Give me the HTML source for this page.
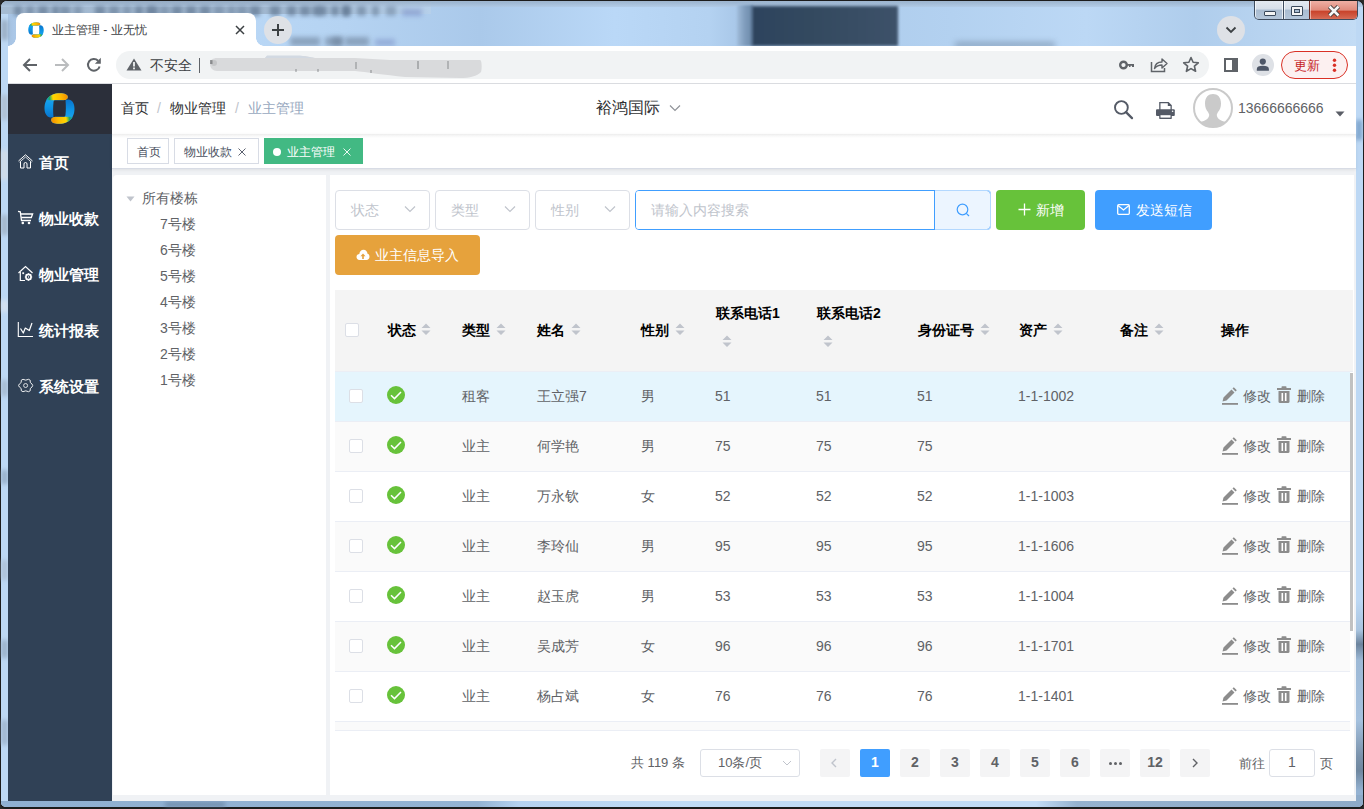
<!DOCTYPE html>
<html><head><meta charset="utf-8">
<style>
*{box-sizing:border-box;margin:0;padding:0}
html,body{width:1364px;height:809px;overflow:hidden}
body{position:relative;font-family:"Liberation Sans",sans-serif;background:#2a2a2a;color:#606266}
.a{position:absolute}
/* window frame */
#frame{left:0;top:0;width:1364px;height:809px;border:1px solid #1c1c1c;border-bottom-width:2px;border-radius:7px 7px 6px 6px;background:#bdd8f4}
#toolbar{left:8px;top:46px;width:1348px;height:37px;background:#fff}
#tbline{left:8px;top:83px;width:1348px;height:1px;background:#dadce0}
#tab{left:16px;top:13px;width:240px;height:34px;background:#fff;border-radius:8px 8px 0 0}
.flare{width:8px;height:8px;top:38px}
#app{left:8px;top:84px;width:1348px;height:717px;background:#f0f2f5}
#sidebar{left:8px;top:84px;width:104px;height:717px;background:#304156}
#logo{left:8px;top:84px;width:104px;height:50px;background:#2b2f3a}
#header{left:112px;top:84px;width:1244px;height:50px;background:#fff}
#tags{left:112px;top:134px;width:1244px;height:35px;background:#fff;border-bottom:1px solid #d8dce5;box-shadow:0 1px 3px 0 rgba(0,0,0,.08)}
#lp{left:113px;top:175px;width:213px;height:620px;background:#fff;border-radius:4px 0 0 0}
#rp{left:330px;top:175px;width:1024px;height:620px;background:#fff}
.t{position:absolute;white-space:nowrap;line-height:1}
</style></head><body>
<div id="frame" class="a"></div>

<!-- blurred desktop -->
<div class="a" style="left:1px;top:801px;width:1362px;height:6px;background:linear-gradient(90deg,#8fb0d2 0%,#93b3d3 35%,#b5d2f0 38%,#c0dcf6 50%,#c2dcf6 76%,#95b2cf 79%,#8eabc9 100%);border-radius:0 0 5px 5px"></div>
<div class="a" style="left:1356px;top:600px;width:7px;height:201px;background:linear-gradient(180deg,#bcd8f4 0%,#a9c4df 15%,#6c849d 22%,#9db9d6 30%,#a5c1de 60%,#7a92ab 78%,#6f879f 85%,#94b2d2 95%)"></div>
<div class="a" style="left:1356px;top:795px;width:7px;height:12px;background:#8eabc9;border-radius:0 0 5px 0"></div>
<div class="a" style="left:165px;top:802px;width:60px;height:5px;background:#5d7896;filter:blur(2px);opacity:.6"></div>
<div class="a" style="left:1356px;top:120px;width:6px;height:20px;background:#7ba2cb;filter:blur(2px)"></div>

<div class="a" style="left:8px;top:2px;width:1348px;height:44px;background:linear-gradient(90deg,#a7c4e4 0%,#b3d0ef 2%,#bddbf9 10%,#b5d3f2 25%,#aac9ea 35%,#bad8f7 45%,#b4d2f1 52%,#a9c8e9 54%,#b3d1f0 70%,#bcd8f5 80%,#afcdec 88%,#c3dcf5 100%)"></div>
<div class="a" style="left:1px;top:1px;width:430px;height:13px;background:linear-gradient(90deg,#a5bbd2 0%,#9fb6ce 60%,#b6d0ea 100%);border-radius:6px 0 0 0"></div><div class="a" style="left:2px;top:1px;width:1360px;height:6px;background:linear-gradient(180deg,#8fa5bd,#b0c8e2);opacity:.7;border-radius:5px 5px 0 0"></div>
<div class="a" style="left:290px;top:37px;width:30px;height:9px;background:#6d829b;filter:blur(2.5px);opacity:.6"></div><div class="a" style="left:325px;top:37px;width:18px;height:9px;background:#6d829b;filter:blur(2.5px);opacity:.6"></div><div class="a" style="left:332px;top:37px;width:10px;height:9px;background:#6d829b;filter:blur(2.5px);opacity:.6"></div><div class="a" style="left:345px;top:37px;width:24px;height:9px;background:#6d829b;filter:blur(2.5px);opacity:.6"></div><div class="a" style="left:375px;top:39px;width:20px;height:7px;background:#8196c9;filter:blur(2.5px);opacity:.6"></div>

<div class="a" style="left:14px;top:6px;width:8px;height:10px;background:#5f7590;filter:blur(2px);opacity:0.65"></div><div class="a" style="left:26px;top:6px;width:8px;height:10px;background:#5f7590;filter:blur(2px);opacity:0.55"></div><div class="a" style="left:38px;top:6px;width:10px;height:10px;background:#5f7590;filter:blur(2px);opacity:0.65"></div><div class="a" style="left:52px;top:6px;width:7px;height:10px;background:#5f7590;filter:blur(2px);opacity:0.65"></div><div class="a" style="left:60px;top:6px;width:10px;height:10px;background:#5f7590;filter:blur(2px);opacity:0.55"></div><div class="a" style="left:74px;top:6px;width:8px;height:10px;background:#5f7590;filter:blur(2px);opacity:0.45"></div><div class="a" style="left:95px;top:6px;width:10px;height:10px;background:#5f7590;filter:blur(2px);opacity:0.65"></div><div class="a" style="left:109px;top:6px;width:10px;height:10px;background:#5f7590;filter:blur(2px);opacity:0.55"></div><div class="a" style="left:123px;top:6px;width:8px;height:10px;background:#5f7590;filter:blur(2px);opacity:0.45"></div><div class="a" style="left:135px;top:6px;width:8px;height:10px;background:#5f7590;filter:blur(2px);opacity:0.65"></div><div class="a" style="left:146px;top:6px;width:7px;height:10px;background:#5f7590;filter:blur(2px);opacity:0.65"></div><div class="a" style="left:150px;top:6px;width:8px;height:10px;background:#5f7590;filter:blur(2px);opacity:0.65"></div><div class="a" style="left:160px;top:6px;width:9px;height:10px;background:#5f7590;filter:blur(2px);opacity:0.45"></div><div class="a" style="left:172px;top:6px;width:10px;height:10px;background:#5f7590;filter:blur(2px);opacity:0.65"></div><div class="a" style="left:186px;top:6px;width:10px;height:10px;background:#5f7590;filter:blur(2px);opacity:0.65"></div><div class="a" style="left:200px;top:6px;width:10px;height:10px;background:#5f7590;filter:blur(2px);opacity:0.65"></div><div class="a" style="left:214px;top:6px;width:10px;height:10px;background:#5f7590;filter:blur(2px);opacity:0.45"></div><div class="a" style="left:228px;top:6px;width:7px;height:10px;background:#5f7590;filter:blur(2px);opacity:0.45"></div><div class="a" style="left:237px;top:6px;width:10px;height:10px;background:#5f7590;filter:blur(2px);opacity:0.45"></div><div class="a" style="left:250px;top:6px;width:10px;height:10px;background:#5f7590;filter:blur(2px);opacity:0.65"></div><div class="a" style="left:270px;top:6px;width:10px;height:10px;background:#5f7590;filter:blur(2px);opacity:0.65"></div><div class="a" style="left:287px;top:6px;width:9px;height:10px;background:#5f7590;filter:blur(2px);opacity:0.65"></div><div class="a" style="left:300px;top:6px;width:10px;height:10px;background:#5f7590;filter:blur(2px);opacity:0.65"></div><div class="a" style="left:312px;top:6px;width:9px;height:10px;background:#5f7590;filter:blur(2px);opacity:0.65"></div><div class="a" style="left:318px;top:6px;width:9px;height:10px;background:#5f7590;filter:blur(2px);opacity:0.65"></div><div class="a" style="left:331px;top:6px;width:8px;height:10px;background:#5f7590;filter:blur(2px);opacity:0.65"></div><div class="a" style="left:342px;top:6px;width:7px;height:10px;background:#5f7590;filter:blur(2px);opacity:0.65"></div><div class="a" style="left:343px;top:6px;width:8px;height:10px;background:#5f7590;filter:blur(2px);opacity:0.65"></div><div class="a" style="left:357px;top:6px;width:9px;height:10px;background:#5f7590;filter:blur(2px);opacity:0.55"></div><div class="a" style="left:372px;top:6px;width:7px;height:10px;background:#5f7590;filter:blur(2px);opacity:0.55"></div><div class="a" style="left:386px;top:6px;width:10px;height:10px;background:#5f7590;filter:blur(2px);opacity:0.45"></div><div class="a" style="left:402px;top:9px;width:20px;height:7px;background:#7c90c8;filter:blur(2.5px);opacity:.6"></div><div class="a" style="left:737px;top:5px;width:16px;height:41px;background:linear-gradient(90deg,#a0bcda,#7f9cbc 50%,#6a88a8);filter:blur(1px)"></div>
<div class="a" style="left:752px;top:6px;width:146px;height:40px;background:linear-gradient(90deg,#2d435d,#33495f 40%,#3d5169);filter:blur(1.5px)"></div>
<div class="a" style="left:955px;top:42px;width:100px;height:6px;background:#6f86a0;filter:blur(3px);opacity:.6"></div>
<div class="a" style="left:1px;top:20px;width:7px;height:20px;background:#8d9fb3;filter:blur(2px);opacity:.7"></div><div class="a" style="left:1px;top:95px;width:7px;height:25px;background:#a9b6c4;filter:blur(2px);opacity:.7"></div><div class="a" style="left:1px;top:150px;width:7px;height:30px;background:#d9dde2;filter:blur(2px);opacity:.7"></div><div class="a" style="left:1px;top:215px;width:7px;height:20px;background:#9aa9ba;filter:blur(2px);opacity:.7"></div><div class="a" style="left:1px;top:300px;width:7px;height:12px;background:#e0e6ee;filter:blur(2px);opacity:.7"></div><div class="a" style="left:1px;top:380px;width:7px;height:16px;background:#9eb0c4;filter:blur(2px);opacity:.7"></div><div class="a" style="left:1px;top:470px;width:7px;height:14px;background:#8aa0b8;filter:blur(2px);opacity:.7"></div><div class="a" style="left:1px;top:560px;width:7px;height:20px;background:#a8bace;filter:blur(2px);opacity:.7"></div><div class="a" style="left:1px;top:640px;width:7px;height:18px;background:#8ea3bb;filter:blur(2px);opacity:.7"></div><div class="a" style="left:1px;top:720px;width:7px;height:25px;background:#95aac2;filter:blur(2px);opacity:.7"></div>
<!-- window buttons -->
<div class="a" style="left:1254px;top:1px;width:104px;height:19px;border:1px solid #3e4c5e;border-top:none;border-radius:0 0 5px 5px;overflow:hidden;background:linear-gradient(180deg,#e3e9f0 0%,#d6dfe9 45%,#a9bcd1 50%,#b4c6da 100%)">
  <div class="a" style="left:0;top:0;width:102px;height:19px;border:1px solid rgba(255,255,255,.7);border-top:none;border-radius:0 0 4px 4px"></div>
  <div class="a" style="left:28px;top:0;width:1px;height:20px;background:#3e4c5e"></div>
  <div class="a" style="left:29px;top:0;width:1px;height:20px;background:rgba(255,255,255,.7)"></div>
  <div class="a" style="left:27px;top:0;width:1px;height:20px;background:rgba(255,255,255,.7)"></div>
  <div class="a" style="left:54px;top:0;width:1px;height:20px;background:#6b2a22"></div>
  <div class="a" style="left:55px;top:0;width:48px;height:20px;background:linear-gradient(180deg,#eeb0a5 0%,#e08b7c 45%,#c9442c 52%,#d4654f 85%,#e0907f 100%);border-left:1px solid rgba(255,255,255,.5)"></div>
  <div class="a" style="left:9px;top:10px;width:12px;height:5px;background:#f4f4f4;border:1px solid #3b4a5c;border-radius:1px"></div>
  <div class="a" style="left:36px;top:5px;width:12px;height:10px;background:#f4f4f4;border:1px solid #3b4a5c;border-radius:1px"></div>
  <div class="a" style="left:39px;top:8px;width:6px;height:4px;background:#a9bcd1;border:1px solid #3b4a5c"></div>
  <svg class="a" style="left:72px;top:4px" width="14" height="12" viewBox="0 0 14 12"><path d="M2.5 1.5 L11.5 10.5 M11.5 1.5 L2.5 10.5" stroke="#3b3b3b" stroke-width="4.4"/><path d="M2.5 1.5 L11.5 10.5 M11.5 1.5 L2.5 10.5" stroke="#f6f6f6" stroke-width="2.6"/></svg>
</div>
<!-- tab -->
<div id="tab" class="a"></div>
<div class="a" style="left:8px;top:38px;width:8px;height:8px;background:radial-gradient(circle at 0 0,transparent 7.5px,#fff 8px)"></div>
<div class="a" style="left:256px;top:38px;width:8px;height:8px;background:radial-gradient(circle at 100% 0,transparent 7.5px,#fff 8px)"></div>
<svg class="a" style="left:28px;top:22px" width="16" height="16" viewBox="0 0 32 32">
 <defs>
  <linearGradient id="fab" x1="0" y1="0" x2="0" y2="1"><stop offset="0" stop-color="#24acf2"/><stop offset=".55" stop-color="#0d95e6"/><stop offset="1" stop-color="#0a74cc"/></linearGradient>
  <linearGradient id="fay" gradientUnits="userSpaceOnUse" x1="2" y1="6" x2="24" y2="3"><stop offset="0" stop-color="#13a3e4"/><stop offset=".17" stop-color="#22a860"/><stop offset=".33" stop-color="#ffd600"/><stop offset=".7" stop-color="#fdb900"/><stop offset="1" stop-color="#f29000"/></linearGradient>
  <clipPath id="fac"><polygon points="0,7.5 32,7.5 32,-1 6,-1"/></clipPath>
  
 </defs>
 <g><path d="M9.8 24.6 C7 26.2 3 25.2 1.4 21 C0 17 0.1 11 3 6.5 C6 2 11 0.2 17 0.3 C21 0.4 24.6 1.5 24.6 4 C24.6 6.5 22 7.4 19.5 7.4 L11.2 7.4 C10.2 7.4 9.8 8.5 9.8 10 C9.3 14 9.3 19 9.8 24.6Z" fill="url(#fab)"/><path d="M9.8 24.6 C7 26.2 3 25.2 1.4 21 C0 17 0.1 11 3 6.5 C6 2 11 0.2 17 0.3 C21 0.4 24.6 1.5 24.6 4 C24.6 6.5 22 7.4 19.5 7.4 L11.2 7.4 C10.2 7.4 9.8 8.5 9.8 10 C9.3 14 9.3 19 9.8 24.6Z" fill="url(#fay)" clip-path="url(#fac)"/></g>
 <g transform="rotate(180 16 16)"><path d="M9.8 24.6 C7 26.2 3 25.2 1.4 21 C0 17 0.1 11 3 6.5 C6 2 11 0.2 17 0.3 C21 0.4 24.6 1.5 24.6 4 C24.6 6.5 22 7.4 19.5 7.4 L11.2 7.4 C10.2 7.4 9.8 8.5 9.8 10 C9.3 14 9.3 19 9.8 24.6Z" fill="url(#fab)"/><path d="M9.8 24.6 C7 26.2 3 25.2 1.4 21 C0 17 0.1 11 3 6.5 C6 2 11 0.2 17 0.3 C21 0.4 24.6 1.5 24.6 4 C24.6 6.5 22 7.4 19.5 7.4 L11.2 7.4 C10.2 7.4 9.8 8.5 9.8 10 C9.3 14 9.3 19 9.8 24.6Z" fill="url(#fay)" clip-path="url(#fac)"/></g>
</svg>
<div class="t" style="left:52px;top:24px;font-size:12px;color:#3c4043">业主管理 - 业无忧</div>
<svg class="a" style="left:235px;top:25px" width="10" height="10" viewBox="0 0 10 10"><path d="M1 1 L9 9 M9 1 L1 9" stroke="#3c4043" stroke-width="1.5"/></svg>
<div class="a" style="left:264px;top:16px;width:28px;height:28px;border-radius:50%;background:#dee1e6"></div>
<svg class="a" style="left:271px;top:23px" width="14" height="14" viewBox="0 0 14 14"><path d="M7 1 V13 M1 7 H13" stroke="#3c4043" stroke-width="2"/></svg>
<div class="a" style="left:1217px;top:16px;width:28px;height:28px;border-radius:50%;background:#dee1e6"></div>
<svg class="a" style="left:1225px;top:25px" width="12" height="10" viewBox="0 0 12 10"><path d="M1.5 2.5 L6 7 L10.5 2.5" stroke="#3c4043" stroke-width="1.8" fill="none"/></svg>

<div id="toolbar" class="a"></div>
<div id="tbline" class="a"></div>
<svg class="a" style="left:22px;top:57px" width="16" height="16" viewBox="0 0 16 16"><path d="M15 8 H2.5 M8 2 L2 8 L8 14" stroke="#5f6368" stroke-width="2" fill="none"/></svg>
<svg class="a" style="left:54px;top:57px" width="16" height="16" viewBox="0 0 16 16"><path d="M1 8 H13.5 M8 2 L14 8 L8 14" stroke="#babcbe" stroke-width="2" fill="none"/></svg>
<svg class="a" style="left:84px;top:55px" width="20" height="20" viewBox="84 55 20 20"><path d="M99.6 66.4 A5.9 5.9 0 1 1 98.1 60.7" stroke="#5f6368" stroke-width="2" fill="none"/><path d="M100.8 57.8 V63.8 H94.9Z" fill="#5f6368"/></svg>
<div class="a" style="left:116px;top:51px;width:1093px;height:28px;border-radius:14px;background:#f1f3f4"></div>
<svg class="a" style="left:126px;top:58px" width="16" height="13" viewBox="0 0 16 13"><path d="M8 0.5 L15.5 12.5 H0.5 Z" fill="#5f6368"/><rect x="7.1" y="4" width="1.8" height="4.5" fill="#f1f3f4"/><rect x="7.1" y="9.5" width="1.8" height="1.8" fill="#f1f3f4"/></svg>
<div class="t" style="left:150px;top:58px;font-size:14px;color:#3c4043">不安全</div>
<div class="a" style="left:199px;top:58px;width:1px;height:15px;background:#5f6368"></div>
<svg class="a" style="left:205px;top:54px;filter:blur(0.6px)" width="280" height="26" viewBox="0 0 280 26"><path d="M5 10 C5 6 8 4 12 4 L60 4 L62 2 L100 2 L110 4 L150 4 L185 6 L275 6 C277 6 277 15 276 18 C272 22 265 24 255 24 L200 23 C180 21 160 18 150 17 L12 17 C8 17 5 14 5 10Z" fill="#d9dadc"/><path d="M60 4 L62 1.5 L95 1.5 L110 4Z" fill="#d2d9e2"/><circle cx="9" cy="9" r="3" fill="#c5c6c8"/><rect x="5" y="6" width="2.5" height="4" fill="#606266" opacity=".6"/><rect x="212" y="7" width="2" height="8" fill="#55585c" opacity=".35"/><rect x="242" y="7" width="2" height="8" fill="#55585c" opacity=".3"/><rect x="150" y="8" width="2" height="7" fill="#55585c" opacity=".3"/><rect x="112" y="15" width="2" height="3" fill="#55585c" opacity=".3"/><rect x="90" y="15" width="2" height="3" fill="#55585c" opacity=".3"/><rect x="165" y="16" width="2" height="3" fill="#55585c" opacity=".3"/></svg>

<svg class="a" style="left:1119px;top:60px" width="16" height="10" viewBox="0 0 16 10"><circle cx="4.5" cy="5" r="3.3" stroke="#5f6368" stroke-width="2.4" fill="none"/><path d="M7.5 4 H15 V7 H13 V5.8 H11.5 V7 H10 V5.8 H7.5Z" fill="#5f6368"/></svg>
<svg class="a" style="left:1150px;top:57px" width="18" height="16" viewBox="0 0 18 16"><path d="M1.5 5 V14.5 H14.5 V11" stroke="#5f6368" stroke-width="1.5" fill="none"/><path d="M4.5 11.5 C5 7 8 5 12 5 V2 L17 6.5 L12 11 V8 C9 8 6.5 9 4.5 11.5Z" stroke="#5f6368" stroke-width="1.4" fill="none" stroke-linejoin="round"/></svg>
<svg class="a" style="left:1182px;top:56px" width="18" height="17" viewBox="0 0 18 17"><path d="M9 1.5 L11.1 6.3 L16.3 6.8 L12.4 10.2 L13.6 15.3 L9 12.6 L4.4 15.3 L5.6 10.2 L1.7 6.8 L6.9 6.3Z" stroke="#5f6368" stroke-width="1.6" fill="none" stroke-linejoin="round"/></svg>
<svg class="a" style="left:1224px;top:58px" width="14" height="14" viewBox="0 0 14 14"><rect x="1" y="1" width="12" height="12" fill="none" stroke="#5f6368" stroke-width="2"/><rect x="8" y="1" width="5" height="12" fill="#5f6368"/></svg>
<div class="a" style="left:1252px;top:54px;width:22px;height:22px;border-radius:50%;background:#dee1e6"></div>
<svg class="a" style="left:1252px;top:54px" width="22" height="22" viewBox="1252 54 22 22"><circle cx="1262.8" cy="61.6" r="3.1" fill="#4d5667"/><path d="M1256.8 70.8 V69 C1256.8 67 1259 65.8 1262.8 65.8 C1266.6 65.8 1268.9 67 1268.9 69 V70.8Z" fill="#4d5667"/></svg>
<div class="a" style="left:1281px;top:51px;width:67px;height:28px;border-radius:14px;border:1px solid #d93025;background:#fcf0f0"></div>
<svg class="a" style="left:1330px;top:57px" width="9" height="16" viewBox="0 0 9 16"><circle cx="4.5" cy="3.3" r="1.7" fill="#d93025"/><circle cx="4.5" cy="8.3" r="1.7" fill="#d93025"/><circle cx="4.5" cy="13.3" r="1.7" fill="#d93025"/></svg>
<div class="t" style="left:1294px;top:59px;font-size:13px;color:#c5221f">更新</div>

<div id="app" class="a"></div>
<div id="sidebar" class="a"></div>
<div id="logo" class="a"></div>
<div id="header" class="a"></div>
<div id="tags" class="a"></div>
<div class="a" style="left:112px;top:134px;width:1244px;height:4px;background:linear-gradient(180deg,#ececec,#f6f6f6 40%,#fff)"></div>
<div id="lp" class="a"></div>
<div id="rp" class="a"></div>

<!-- logo -->
<svg class="a" style="left:44px;top:93px" width="31" height="31" viewBox="0 0 32 32">
 <defs>
  <linearGradient id="lgb" x1="0" y1="0" x2="0" y2="1"><stop offset="0" stop-color="#24acf2"/><stop offset=".55" stop-color="#0d95e6"/><stop offset="1" stop-color="#0a74cc"/></linearGradient>
  <linearGradient id="lgy" gradientUnits="userSpaceOnUse" x1="2" y1="6" x2="24" y2="3"><stop offset="0" stop-color="#13a3e4"/><stop offset=".17" stop-color="#22a860"/><stop offset=".33" stop-color="#ffd600"/><stop offset=".7" stop-color="#fdb900"/><stop offset="1" stop-color="#f29000"/></linearGradient>
  <clipPath id="lgc"><polygon points="0,7.5 32,7.5 32,-1 6,-1"/></clipPath>
  
 </defs>
 <g><path d="M9.8 24.6 C7 26.2 3 25.2 1.4 21 C0 17 0.1 11 3 6.5 C6 2 11 0.2 17 0.3 C21 0.4 24.6 1.5 24.6 4 C24.6 6.5 22 7.4 19.5 7.4 L11.2 7.4 C10.2 7.4 9.8 8.5 9.8 10 C9.3 14 9.3 19 9.8 24.6Z" fill="url(#lgb)"/><path d="M9.8 24.6 C7 26.2 3 25.2 1.4 21 C0 17 0.1 11 3 6.5 C6 2 11 0.2 17 0.3 C21 0.4 24.6 1.5 24.6 4 C24.6 6.5 22 7.4 19.5 7.4 L11.2 7.4 C10.2 7.4 9.8 8.5 9.8 10 C9.3 14 9.3 19 9.8 24.6Z" fill="url(#lgy)" clip-path="url(#lgc)"/></g>
 <g transform="rotate(180 16 16)"><path d="M9.8 24.6 C7 26.2 3 25.2 1.4 21 C0 17 0.1 11 3 6.5 C6 2 11 0.2 17 0.3 C21 0.4 24.6 1.5 24.6 4 C24.6 6.5 22 7.4 19.5 7.4 L11.2 7.4 C10.2 7.4 9.8 8.5 9.8 10 C9.3 14 9.3 19 9.8 24.6Z" fill="url(#lgb)"/><path d="M9.8 24.6 C7 26.2 3 25.2 1.4 21 C0 17 0.1 11 3 6.5 C6 2 11 0.2 17 0.3 C21 0.4 24.6 1.5 24.6 4 C24.6 6.5 22 7.4 19.5 7.4 L11.2 7.4 C10.2 7.4 9.8 8.5 9.8 10 C9.3 14 9.3 19 9.8 24.6Z" fill="url(#lgy)" clip-path="url(#lgc)"/></g>
</svg>
<!-- sidebar menu -->
<svg class="a" style="left:12px;top:140px" width="28" height="260" viewBox="12 140 28 260" fill="none" stroke="#fff">
 <path d="M18.5 161 L25.5 154.8 L32.5 161" stroke-width="1"/><path d="M19.5 162.2 L25.5 157 L31.5 162.2" stroke-width="0.8"/>
 <path d="M20.5 161.5 V168 H24 V164 Q24 162.5 25.5 162.5 Q27 162.5 27 164 V168 H30.5 V161.5" stroke-width="1"/>
 <path d="M18 211.3 L20.3 211.8 L21.5 220.5 H31" stroke-width="1.3"/><path d="M20.6 214 H32.6 L31.3 217.5 H21.2" stroke-width="1.3"/>
 <circle cx="22.8" cy="223" r="1.3" fill="#fff" stroke="none"/><circle cx="29" cy="223" r="1.3" fill="#fff" stroke="none"/>
 <path d="M18.5 273 L25.5 266.5 L32.5 273" stroke-width="1.2"/><path d="M20.3 272 V280.5 H25" stroke-width="1.2"/>
 <rect x="22.3" y="272.3" width="1.8" height="1.8" fill="#fff" stroke="none"/>
 <circle cx="28.5" cy="277" r="2.6" stroke-width="1.6"/><circle cx="28.5" cy="277" r="0.7" fill="#fff" stroke="none"/>
 <path d="M28.5 273.3 V274.3 M28.5 279.7 V280.7 M24.8 277 H25.8 M31.2 277 H32.2 M25.9 274.4 L26.6 275.1 M30.4 278.9 L31.1 279.6 M31.1 274.4 L30.4 275.1 M26.6 278.9 L25.9 279.6" stroke-width="1.2"/>
 <path d="M18.3 322 V336.5 H33" stroke-width="1.1"/><path d="M20.5 328.5 L23.3 333 L25.3 328 L29.3 330.5 L32 323" stroke-width="1.2" stroke-linejoin="round"/>
 <path d="M23 379.3 Q25.7 381 28.5 379.3 Q31 379.5 30.3 382.5 Q32.5 384 32.7 385.5 Q32.5 387 30.3 388.5 Q31 391.5 28.5 391.7 Q25.7 390 23 391.7 Q20.5 391.5 21.2 388.5 Q18.8 387 18.6 385.5 Q18.8 384 21.2 382.5 Q20.5 379.5 23 379.3Z" stroke-width="0.9"/>
 <circle cx="25.6" cy="385.5" r="2" stroke-width="0.8"/>
</svg>


<div class="t" style="left:39px;top:155px;font-size:15px;color:#fff;font-weight:bold">首页</div>

<div class="t" style="left:39px;top:211px;font-size:15px;color:#fff;font-weight:bold">物业收款</div>

<div class="t" style="left:39px;top:267px;font-size:15px;color:#fff;font-weight:bold">物业管理</div>

<div class="t" style="left:39px;top:323px;font-size:15px;color:#fff;font-weight:bold">统计报表</div>

<div class="t" style="left:39px;top:379px;font-size:15px;color:#fff;font-weight:bold">系统设置</div>
<!-- header -->
<div class="t" style="left:121px;top:101px;font-size:14px;color:#303133">首页</div>
<div class="t" style="left:157px;top:101px;font-size:14px;color:#c0c4cc">/</div>
<div class="t" style="left:170px;top:101px;font-size:14px;color:#303133">物业管理</div>
<div class="t" style="left:235px;top:101px;font-size:14px;color:#c0c4cc">/</div>
<div class="t" style="left:248px;top:101px;font-size:14px;color:#97a8be">业主管理</div>
<div class="t" style="left:596px;top:100px;font-size:16px;color:#303133">裕鸿国际</div>
<svg class="a" style="left:669px;top:104px" width="12" height="8" viewBox="0 0 12 8"><path d="M1 1.5 L6 6.5 L11 1.5" stroke="#909399" stroke-width="1.2" fill="none"/></svg>
<svg class="a" style="left:1110px;top:96px" width="26" height="26" viewBox="1110 96 26 26"><circle cx="1121.4" cy="107.5" r="6.4" stroke="#545a66" stroke-width="1.9" fill="none"/><path d="M1126 112.1 L1132 118.1" stroke="#545a66" stroke-width="2.3" stroke-linecap="round"/></svg>
<svg class="a" style="left:1154px;top:100px" width="24" height="22" viewBox="1154 100 24 22"><path d="M1159.2 102 H1168.6 L1171.8 105.2 V110 H1159.2Z" fill="#545a66"/><path d="M1160.5 103.3 H1167.8 V106 H1170.5 V110 H1160.5Z" fill="#fff"/><rect x="1156" y="109.2" width="18.8" height="6.8" rx="1" fill="#545a66"/><circle cx="1172.6" cy="111.3" r="0.8" fill="#fff"/><rect x="1159.2" y="114" width="12.6" height="4.9" rx="0.6" fill="#545a66"/><rect x="1160.5" y="115.2" width="10" height="2.4" fill="#fff"/></svg>
<svg class="a" style="left:1191px;top:86px" width="44" height="44" viewBox="1191 86 44 44"><defs><clipPath id="avc"><circle cx="1213" cy="108" r="19"/></clipPath></defs><circle cx="1213" cy="108" r="19" fill="#fff" stroke="#cacaca" stroke-width="2"/><path clip-path="url(#avc)" d="M1205 103.5 C1205 97 1208.5 94 1213 94 C1217.5 94 1221 97 1221 103.5 C1221 107 1220 110 1218 112 L1216.8 114.5 C1216.8 118 1219 120 1224 121.5 C1226 122 1228 123 1229.5 124.5 C1225 128 1219 129 1213 129 C1207 129 1201 128 1196.5 124.5 C1198 123 1200 122 1202 121.5 C1207 120 1209.2 118 1209.2 114.5 L1208 112 C1206 110 1205 107 1205 103.5Z" fill="#cacaca"/></svg>
<div class="t" style="left:1238px;top:101px;font-size:14px;color:#606266">13666666666</div>
<svg class="a" style="left:1335px;top:111px" width="10" height="6" viewBox="0 0 10 6"><path d="M0.5 0.5 H9.5 L5 5.5Z" fill="#5a5e66"/></svg>
<!-- tags -->
<div class="a" style="left:127px;top:138px;width:42px;height:26px;border:1px solid #d8dce5;background:#fff"></div>
<div class="t" style="left:137px;top:146px;font-size:12px;color:#495060">首页</div>
<div class="a" style="left:174px;top:138px;width:85px;height:26px;border:1px solid #d8dce5;background:#fff"></div>
<div class="t" style="left:184px;top:146px;font-size:12px;color:#495060">物业收款</div>
<svg class="a" style="left:238px;top:148px" width="8" height="8" viewBox="0 0 8 8"><path d="M0.5 0.5 L7.5 7.5 M7.5 0.5 L0.5 7.5" stroke="#495060" stroke-width="0.9"/></svg>
<div class="a" style="left:264px;top:138px;width:99px;height:26px;background:#42b983;border:1px solid #42b983"></div>
<div class="a" style="left:273px;top:148px;width:8px;height:8px;border-radius:50%;background:#fff"></div>
<div class="t" style="left:287px;top:146px;font-size:12px;color:#fff">业主管理</div>
<svg class="a" style="left:343px;top:148px" width="8" height="8" viewBox="0 0 8 8"><path d="M0.5 0.5 L7.5 7.5 M7.5 0.5 L0.5 7.5" stroke="#fff" stroke-width="0.9"/></svg>

<!-- tree -->
<svg class="a" style="left:126px;top:196px" width="9" height="6" viewBox="0 0 9 6"><path d="M0.5 0.5 H8.5 L4.5 5.5Z" fill="#c0c4cc"/></svg>
<div class="t" style="left:142px;top:191px;font-size:14px;color:#606266">所有楼栋</div>
<div class="t" style="left:160px;top:217px;font-size:14px;color:#606266">7号楼</div>
<div class="t" style="left:160px;top:243px;font-size:14px;color:#606266">6号楼</div>
<div class="t" style="left:160px;top:269px;font-size:14px;color:#606266">5号楼</div>
<div class="t" style="left:160px;top:295px;font-size:14px;color:#606266">4号楼</div>
<div class="t" style="left:160px;top:321px;font-size:14px;color:#606266">3号楼</div>
<div class="t" style="left:160px;top:347px;font-size:14px;color:#606266">2号楼</div>
<div class="t" style="left:160px;top:373px;font-size:14px;color:#606266">1号楼</div>

<!-- filters -->
<div class="a" style="left:335px;top:190px;width:95px;height:40px;border:1px solid #dcdfe6;border-radius:4px;background:#fff"></div>
<div class="t" style="left:351px;top:203px;font-size:14px;color:#c0c4cc">状态</div>
<svg class="a" style="left:404px;top:205px" width="12" height="8" viewBox="0 0 12 8"><path d="M1 1.5 L6 6.5 L11 1.5" stroke="#c0c4cc" stroke-width="1.2" fill="none"/></svg>
<div class="a" style="left:435px;top:190px;width:95px;height:40px;border:1px solid #dcdfe6;border-radius:4px;background:#fff"></div>
<div class="t" style="left:451px;top:203px;font-size:14px;color:#c0c4cc">类型</div>
<svg class="a" style="left:504px;top:205px" width="12" height="8" viewBox="0 0 12 8"><path d="M1 1.5 L6 6.5 L11 1.5" stroke="#c0c4cc" stroke-width="1.2" fill="none"/></svg>
<div class="a" style="left:535px;top:190px;width:95px;height:40px;border:1px solid #dcdfe6;border-radius:4px;background:#fff"></div>
<div class="t" style="left:551px;top:203px;font-size:14px;color:#c0c4cc">性别</div>
<svg class="a" style="left:604px;top:205px" width="12" height="8" viewBox="0 0 12 8"><path d="M1 1.5 L6 6.5 L11 1.5" stroke="#c0c4cc" stroke-width="1.2" fill="none"/></svg>

<div class="a" style="left:635px;top:190px;width:356px;height:40px;border:1px solid #409eff;border-radius:4px;background:#ecf5ff"></div>
<div class="a" style="left:636px;top:191px;width:299px;height:38px;border-radius:3px 0 0 3px;background:#fff;border-right:1px solid #409eff"></div>
<div class="a" style="left:935px;top:190px;width:56px;height:40px;border:1px solid #b3d8ff;border-left:none;border-radius:0 4px 4px 0"></div>
<div class="t" style="left:651px;top:203px;font-size:14px;color:#c0c4cc">请输入内容搜索</div>
<svg class="a" style="left:956px;top:203px" width="14" height="14" viewBox="0 0 14 14"><circle cx="6.5" cy="6.5" r="5.3" stroke="#409eff" stroke-width="1.2" fill="none"/><path d="M10.3 10.3 L13 13" stroke="#409eff" stroke-width="1.2"/></svg>
<div class="a" style="left:996px;top:190px;width:89px;height:40px;border-radius:4px;background:#67c23a"></div>
<svg class="a" style="left:1018px;top:203px" width="13" height="13" viewBox="0 0 13 13"><path d="M6.5 0.5 V12.5 M0.5 6.5 H12.5" stroke="#fff" stroke-width="1.3"/></svg>
<div class="t" style="left:1036px;top:203px;font-size:14px;color:#fff">新增</div>
<div class="a" style="left:1095px;top:190px;width:117px;height:40px;border-radius:4px;background:#409eff"></div>
<svg class="a" style="left:1117px;top:204px" width="13" height="11" viewBox="0 0 13 11"><rect x="0.7" y="0.7" width="11.6" height="9.6" rx="1" stroke="#fff" stroke-width="1.3" fill="none"/><path d="M1 1.5 L6.5 6 L12 1.5" stroke="#fff" stroke-width="1.3" fill="none"/></svg>
<div class="t" style="left:1136px;top:203px;font-size:14px;color:#fff">发送短信</div>
<div class="a" style="left:335px;top:235px;width:145px;height:40px;border-radius:4px;background:#e6a23c"></div>
<svg class="a" style="left:356px;top:249px" width="14" height="12" viewBox="0 0 14 12"><path d="M3.5 11 C1.5 11 0.5 9.5 0.5 8 C0.5 6.3 1.8 5 3.3 5 C3.6 2.5 5.3 0.8 7.5 0.8 C9.8 0.8 11.4 2.6 11.5 4.8 C12.9 5.1 13.5 6.3 13.5 7.8 C13.5 9.5 12.3 11 10.5 11Z" fill="#fff"/><path d="M7 4.5 L4.5 7.2 H6.2 V10 H7.8 V7.2 H9.5Z" fill="#e6a23c"/></svg>
<div class="t" style="left:375px;top:248px;font-size:14px;color:#fff">业主信息导入</div>
<!-- table -->
<div class="a" style="left:335px;top:290px;width:1018px;height:82px;background:#f4f4f4;border-bottom:1px solid #ebeef5"></div>
<div class="a" style="left:345px;top:323px;width:14px;height:14px;border:1px solid #dcdfe6;border-radius:2px;background:#fff"></div>
<div class="t" style="left:388px;top:323px;font-size:14px;color:#000;font-weight:bold">状态</div>
<svg class="a" style="left:421px;top:323px" width="10" height="13" viewBox="0 0 10 13"><path d="M5 0.5 L9.5 5 H0.5Z M0.5 7.5 H9.5 L5 12Z" fill="#c0c4cc"/></svg>
<div class="t" style="left:462px;top:323px;font-size:14px;color:#000;font-weight:bold">类型</div>
<svg class="a" style="left:496px;top:323px" width="10" height="13" viewBox="0 0 10 13"><path d="M5 0.5 L9.5 5 H0.5Z M0.5 7.5 H9.5 L5 12Z" fill="#c0c4cc"/></svg>
<div class="t" style="left:537px;top:323px;font-size:14px;color:#000;font-weight:bold">姓名</div>
<svg class="a" style="left:571px;top:323px" width="10" height="13" viewBox="0 0 10 13"><path d="M5 0.5 L9.5 5 H0.5Z M0.5 7.5 H9.5 L5 12Z" fill="#c0c4cc"/></svg>
<div class="t" style="left:641px;top:323px;font-size:14px;color:#000;font-weight:bold">性别</div>
<svg class="a" style="left:675px;top:323px" width="10" height="13" viewBox="0 0 10 13"><path d="M5 0.5 L9.5 5 H0.5Z M0.5 7.5 H9.5 L5 12Z" fill="#c0c4cc"/></svg>
<div class="t" style="left:918px;top:323px;font-size:14px;color:#000;font-weight:bold">身份证号</div>
<svg class="a" style="left:980px;top:323px" width="10" height="13" viewBox="0 0 10 13"><path d="M5 0.5 L9.5 5 H0.5Z M0.5 7.5 H9.5 L5 12Z" fill="#c0c4cc"/></svg>
<div class="t" style="left:1019px;top:323px;font-size:14px;color:#000;font-weight:bold">资产</div>
<svg class="a" style="left:1053px;top:323px" width="10" height="13" viewBox="0 0 10 13"><path d="M5 0.5 L9.5 5 H0.5Z M0.5 7.5 H9.5 L5 12Z" fill="#c0c4cc"/></svg>
<div class="t" style="left:1120px;top:323px;font-size:14px;color:#000;font-weight:bold">备注</div>
<svg class="a" style="left:1154px;top:323px" width="10" height="13" viewBox="0 0 10 13"><path d="M5 0.5 L9.5 5 H0.5Z M0.5 7.5 H9.5 L5 12Z" fill="#c0c4cc"/></svg>
<div class="t" style="left:1221px;top:323px;font-size:14px;color:#000;font-weight:bold">操作</div>
<div class="t" style="left:716px;top:306px;font-size:14px;color:#000;font-weight:bold">联系电话1</div>
<svg class="a" style="left:722px;top:335px" width="10" height="13" viewBox="0 0 10 13"><path d="M5 0.5 L9.5 5 H0.5Z M0.5 7.5 H9.5 L5 12Z" fill="#c0c4cc"/></svg>
<div class="t" style="left:817px;top:306px;font-size:14px;color:#000;font-weight:bold">联系电话2</div>
<svg class="a" style="left:823px;top:335px" width="10" height="13" viewBox="0 0 10 13"><path d="M5 0.5 L9.5 5 H0.5Z M0.5 7.5 H9.5 L5 12Z" fill="#c0c4cc"/></svg>
<div class="a" style="left:335px;top:372px;width:1015px;height:50px;background:#e5f5fd;border-bottom:1px solid #ebeef5"></div>
<div class="a" style="left:349px;top:389px;width:14px;height:14px;border:1px solid #dcdfe6;border-radius:2px;background:#fff"></div>
<svg class="a" style="left:387px;top:386px" width="18" height="18" viewBox="0 0 18 18"><circle cx="9" cy="9" r="9" fill="#67c23a"/><path d="M4 9.3 L7.5 12.6 L14 6" stroke="#fff" stroke-width="1.5" fill="none"/></svg>
<div class="t" style="left:462px;top:389px;font-size:14px;color:#606266">租客</div>
<div class="t" style="left:537px;top:389px;font-size:14px;color:#606266">王立强7</div>
<div class="t" style="left:641px;top:389px;font-size:14px;color:#606266">男</div>
<div class="t" style="left:715px;top:389px;font-size:14px;color:#606266">51</div>
<div class="t" style="left:816px;top:389px;font-size:14px;color:#606266">51</div>
<div class="t" style="left:917px;top:389px;font-size:14px;color:#606266">51</div>
<div class="t" style="left:1018px;top:389px;font-size:14px;color:#606266">1-1-1002</div>
<svg class="a" style="left:1221px;top:387px" width="18" height="18" viewBox="0 0 18 18"><path d="M1.5 14.5 L2.5 10.5 L10.5 2.5 L13.5 5.5 L5.5 13.5Z M11.5 1.5 L12.8 0.2 L15.8 3.2 L14.5 4.5Z" fill="#8c8c8c"/><rect x="1" y="16" width="16" height="1.8" fill="#8c8c8c"/></svg>
<div class="t" style="left:1243px;top:389px;font-size:14px;color:#606266">修改</div>
<svg class="a" style="left:1276px;top:386px" width="16" height="18" viewBox="0 0 16 18"><rect x="1" y="2" width="14" height="2" fill="#8c8c8c"/><rect x="5.5" y="0.3" width="5" height="2" rx="0.8" fill="#8c8c8c"/><path d="M2.5 5 H13.5 V15.5 Q13.5 17 12 17 H4 Q2.5 17 2.5 15.5Z" fill="#8c8c8c"/><rect x="5.5" y="7" width="1.6" height="8" fill="#fff"/><rect x="8.9" y="7" width="1.6" height="8" fill="#fff"/></svg>
<div class="t" style="left:1297px;top:389px;font-size:14px;color:#606266">删除</div>
<div class="a" style="left:335px;top:422px;width:1015px;height:50px;background:#fafafa;border-bottom:1px solid #ebeef5"></div>
<div class="a" style="left:349px;top:439px;width:14px;height:14px;border:1px solid #dcdfe6;border-radius:2px;background:#fff"></div>
<svg class="a" style="left:387px;top:436px" width="18" height="18" viewBox="0 0 18 18"><circle cx="9" cy="9" r="9" fill="#67c23a"/><path d="M4 9.3 L7.5 12.6 L14 6" stroke="#fff" stroke-width="1.5" fill="none"/></svg>
<div class="t" style="left:462px;top:439px;font-size:14px;color:#606266">业主</div>
<div class="t" style="left:537px;top:439px;font-size:14px;color:#606266">何学艳</div>
<div class="t" style="left:641px;top:439px;font-size:14px;color:#606266">男</div>
<div class="t" style="left:715px;top:439px;font-size:14px;color:#606266">75</div>
<div class="t" style="left:816px;top:439px;font-size:14px;color:#606266">75</div>
<div class="t" style="left:917px;top:439px;font-size:14px;color:#606266">75</div>
<svg class="a" style="left:1221px;top:437px" width="18" height="18" viewBox="0 0 18 18"><path d="M1.5 14.5 L2.5 10.5 L10.5 2.5 L13.5 5.5 L5.5 13.5Z M11.5 1.5 L12.8 0.2 L15.8 3.2 L14.5 4.5Z" fill="#8c8c8c"/><rect x="1" y="16" width="16" height="1.8" fill="#8c8c8c"/></svg>
<div class="t" style="left:1243px;top:439px;font-size:14px;color:#606266">修改</div>
<svg class="a" style="left:1276px;top:436px" width="16" height="18" viewBox="0 0 16 18"><rect x="1" y="2" width="14" height="2" fill="#8c8c8c"/><rect x="5.5" y="0.3" width="5" height="2" rx="0.8" fill="#8c8c8c"/><path d="M2.5 5 H13.5 V15.5 Q13.5 17 12 17 H4 Q2.5 17 2.5 15.5Z" fill="#8c8c8c"/><rect x="5.5" y="7" width="1.6" height="8" fill="#fff"/><rect x="8.9" y="7" width="1.6" height="8" fill="#fff"/></svg>
<div class="t" style="left:1297px;top:439px;font-size:14px;color:#606266">删除</div>
<div class="a" style="left:335px;top:472px;width:1015px;height:50px;background:#fff;border-bottom:1px solid #ebeef5"></div>
<div class="a" style="left:349px;top:489px;width:14px;height:14px;border:1px solid #dcdfe6;border-radius:2px;background:#fff"></div>
<svg class="a" style="left:387px;top:486px" width="18" height="18" viewBox="0 0 18 18"><circle cx="9" cy="9" r="9" fill="#67c23a"/><path d="M4 9.3 L7.5 12.6 L14 6" stroke="#fff" stroke-width="1.5" fill="none"/></svg>
<div class="t" style="left:462px;top:489px;font-size:14px;color:#606266">业主</div>
<div class="t" style="left:537px;top:489px;font-size:14px;color:#606266">万永钦</div>
<div class="t" style="left:641px;top:489px;font-size:14px;color:#606266">女</div>
<div class="t" style="left:715px;top:489px;font-size:14px;color:#606266">52</div>
<div class="t" style="left:816px;top:489px;font-size:14px;color:#606266">52</div>
<div class="t" style="left:917px;top:489px;font-size:14px;color:#606266">52</div>
<div class="t" style="left:1018px;top:489px;font-size:14px;color:#606266">1-1-1003</div>
<svg class="a" style="left:1221px;top:487px" width="18" height="18" viewBox="0 0 18 18"><path d="M1.5 14.5 L2.5 10.5 L10.5 2.5 L13.5 5.5 L5.5 13.5Z M11.5 1.5 L12.8 0.2 L15.8 3.2 L14.5 4.5Z" fill="#8c8c8c"/><rect x="1" y="16" width="16" height="1.8" fill="#8c8c8c"/></svg>
<div class="t" style="left:1243px;top:489px;font-size:14px;color:#606266">修改</div>
<svg class="a" style="left:1276px;top:486px" width="16" height="18" viewBox="0 0 16 18"><rect x="1" y="2" width="14" height="2" fill="#8c8c8c"/><rect x="5.5" y="0.3" width="5" height="2" rx="0.8" fill="#8c8c8c"/><path d="M2.5 5 H13.5 V15.5 Q13.5 17 12 17 H4 Q2.5 17 2.5 15.5Z" fill="#8c8c8c"/><rect x="5.5" y="7" width="1.6" height="8" fill="#fff"/><rect x="8.9" y="7" width="1.6" height="8" fill="#fff"/></svg>
<div class="t" style="left:1297px;top:489px;font-size:14px;color:#606266">删除</div>
<div class="a" style="left:335px;top:522px;width:1015px;height:50px;background:#fafafa;border-bottom:1px solid #ebeef5"></div>
<div class="a" style="left:349px;top:539px;width:14px;height:14px;border:1px solid #dcdfe6;border-radius:2px;background:#fff"></div>
<svg class="a" style="left:387px;top:536px" width="18" height="18" viewBox="0 0 18 18"><circle cx="9" cy="9" r="9" fill="#67c23a"/><path d="M4 9.3 L7.5 12.6 L14 6" stroke="#fff" stroke-width="1.5" fill="none"/></svg>
<div class="t" style="left:462px;top:539px;font-size:14px;color:#606266">业主</div>
<div class="t" style="left:537px;top:539px;font-size:14px;color:#606266">李玲仙</div>
<div class="t" style="left:641px;top:539px;font-size:14px;color:#606266">男</div>
<div class="t" style="left:715px;top:539px;font-size:14px;color:#606266">95</div>
<div class="t" style="left:816px;top:539px;font-size:14px;color:#606266">95</div>
<div class="t" style="left:917px;top:539px;font-size:14px;color:#606266">95</div>
<div class="t" style="left:1018px;top:539px;font-size:14px;color:#606266">1-1-1606</div>
<svg class="a" style="left:1221px;top:537px" width="18" height="18" viewBox="0 0 18 18"><path d="M1.5 14.5 L2.5 10.5 L10.5 2.5 L13.5 5.5 L5.5 13.5Z M11.5 1.5 L12.8 0.2 L15.8 3.2 L14.5 4.5Z" fill="#8c8c8c"/><rect x="1" y="16" width="16" height="1.8" fill="#8c8c8c"/></svg>
<div class="t" style="left:1243px;top:539px;font-size:14px;color:#606266">修改</div>
<svg class="a" style="left:1276px;top:536px" width="16" height="18" viewBox="0 0 16 18"><rect x="1" y="2" width="14" height="2" fill="#8c8c8c"/><rect x="5.5" y="0.3" width="5" height="2" rx="0.8" fill="#8c8c8c"/><path d="M2.5 5 H13.5 V15.5 Q13.5 17 12 17 H4 Q2.5 17 2.5 15.5Z" fill="#8c8c8c"/><rect x="5.5" y="7" width="1.6" height="8" fill="#fff"/><rect x="8.9" y="7" width="1.6" height="8" fill="#fff"/></svg>
<div class="t" style="left:1297px;top:539px;font-size:14px;color:#606266">删除</div>
<div class="a" style="left:335px;top:572px;width:1015px;height:50px;background:#fff;border-bottom:1px solid #ebeef5"></div>
<div class="a" style="left:349px;top:589px;width:14px;height:14px;border:1px solid #dcdfe6;border-radius:2px;background:#fff"></div>
<svg class="a" style="left:387px;top:586px" width="18" height="18" viewBox="0 0 18 18"><circle cx="9" cy="9" r="9" fill="#67c23a"/><path d="M4 9.3 L7.5 12.6 L14 6" stroke="#fff" stroke-width="1.5" fill="none"/></svg>
<div class="t" style="left:462px;top:589px;font-size:14px;color:#606266">业主</div>
<div class="t" style="left:537px;top:589px;font-size:14px;color:#606266">赵玉虎</div>
<div class="t" style="left:641px;top:589px;font-size:14px;color:#606266">男</div>
<div class="t" style="left:715px;top:589px;font-size:14px;color:#606266">53</div>
<div class="t" style="left:816px;top:589px;font-size:14px;color:#606266">53</div>
<div class="t" style="left:917px;top:589px;font-size:14px;color:#606266">53</div>
<div class="t" style="left:1018px;top:589px;font-size:14px;color:#606266">1-1-1004</div>
<svg class="a" style="left:1221px;top:587px" width="18" height="18" viewBox="0 0 18 18"><path d="M1.5 14.5 L2.5 10.5 L10.5 2.5 L13.5 5.5 L5.5 13.5Z M11.5 1.5 L12.8 0.2 L15.8 3.2 L14.5 4.5Z" fill="#8c8c8c"/><rect x="1" y="16" width="16" height="1.8" fill="#8c8c8c"/></svg>
<div class="t" style="left:1243px;top:589px;font-size:14px;color:#606266">修改</div>
<svg class="a" style="left:1276px;top:586px" width="16" height="18" viewBox="0 0 16 18"><rect x="1" y="2" width="14" height="2" fill="#8c8c8c"/><rect x="5.5" y="0.3" width="5" height="2" rx="0.8" fill="#8c8c8c"/><path d="M2.5 5 H13.5 V15.5 Q13.5 17 12 17 H4 Q2.5 17 2.5 15.5Z" fill="#8c8c8c"/><rect x="5.5" y="7" width="1.6" height="8" fill="#fff"/><rect x="8.9" y="7" width="1.6" height="8" fill="#fff"/></svg>
<div class="t" style="left:1297px;top:589px;font-size:14px;color:#606266">删除</div>
<div class="a" style="left:335px;top:622px;width:1015px;height:50px;background:#fafafa;border-bottom:1px solid #ebeef5"></div>
<div class="a" style="left:349px;top:639px;width:14px;height:14px;border:1px solid #dcdfe6;border-radius:2px;background:#fff"></div>
<svg class="a" style="left:387px;top:636px" width="18" height="18" viewBox="0 0 18 18"><circle cx="9" cy="9" r="9" fill="#67c23a"/><path d="M4 9.3 L7.5 12.6 L14 6" stroke="#fff" stroke-width="1.5" fill="none"/></svg>
<div class="t" style="left:462px;top:639px;font-size:14px;color:#606266">业主</div>
<div class="t" style="left:537px;top:639px;font-size:14px;color:#606266">吴成芳</div>
<div class="t" style="left:641px;top:639px;font-size:14px;color:#606266">女</div>
<div class="t" style="left:715px;top:639px;font-size:14px;color:#606266">96</div>
<div class="t" style="left:816px;top:639px;font-size:14px;color:#606266">96</div>
<div class="t" style="left:917px;top:639px;font-size:14px;color:#606266">96</div>
<div class="t" style="left:1018px;top:639px;font-size:14px;color:#606266">1-1-1701</div>
<svg class="a" style="left:1221px;top:637px" width="18" height="18" viewBox="0 0 18 18"><path d="M1.5 14.5 L2.5 10.5 L10.5 2.5 L13.5 5.5 L5.5 13.5Z M11.5 1.5 L12.8 0.2 L15.8 3.2 L14.5 4.5Z" fill="#8c8c8c"/><rect x="1" y="16" width="16" height="1.8" fill="#8c8c8c"/></svg>
<div class="t" style="left:1243px;top:639px;font-size:14px;color:#606266">修改</div>
<svg class="a" style="left:1276px;top:636px" width="16" height="18" viewBox="0 0 16 18"><rect x="1" y="2" width="14" height="2" fill="#8c8c8c"/><rect x="5.5" y="0.3" width="5" height="2" rx="0.8" fill="#8c8c8c"/><path d="M2.5 5 H13.5 V15.5 Q13.5 17 12 17 H4 Q2.5 17 2.5 15.5Z" fill="#8c8c8c"/><rect x="5.5" y="7" width="1.6" height="8" fill="#fff"/><rect x="8.9" y="7" width="1.6" height="8" fill="#fff"/></svg>
<div class="t" style="left:1297px;top:639px;font-size:14px;color:#606266">删除</div>
<div class="a" style="left:335px;top:672px;width:1015px;height:50px;background:#fff;border-bottom:1px solid #ebeef5"></div>
<div class="a" style="left:349px;top:689px;width:14px;height:14px;border:1px solid #dcdfe6;border-radius:2px;background:#fff"></div>
<svg class="a" style="left:387px;top:686px" width="18" height="18" viewBox="0 0 18 18"><circle cx="9" cy="9" r="9" fill="#67c23a"/><path d="M4 9.3 L7.5 12.6 L14 6" stroke="#fff" stroke-width="1.5" fill="none"/></svg>
<div class="t" style="left:462px;top:689px;font-size:14px;color:#606266">业主</div>
<div class="t" style="left:537px;top:689px;font-size:14px;color:#606266">杨占斌</div>
<div class="t" style="left:641px;top:689px;font-size:14px;color:#606266">女</div>
<div class="t" style="left:715px;top:689px;font-size:14px;color:#606266">76</div>
<div class="t" style="left:816px;top:689px;font-size:14px;color:#606266">76</div>
<div class="t" style="left:917px;top:689px;font-size:14px;color:#606266">76</div>
<div class="t" style="left:1018px;top:689px;font-size:14px;color:#606266">1-1-1401</div>
<svg class="a" style="left:1221px;top:687px" width="18" height="18" viewBox="0 0 18 18"><path d="M1.5 14.5 L2.5 10.5 L10.5 2.5 L13.5 5.5 L5.5 13.5Z M11.5 1.5 L12.8 0.2 L15.8 3.2 L14.5 4.5Z" fill="#8c8c8c"/><rect x="1" y="16" width="16" height="1.8" fill="#8c8c8c"/></svg>
<div class="t" style="left:1243px;top:689px;font-size:14px;color:#606266">修改</div>
<svg class="a" style="left:1276px;top:686px" width="16" height="18" viewBox="0 0 16 18"><rect x="1" y="2" width="14" height="2" fill="#8c8c8c"/><rect x="5.5" y="0.3" width="5" height="2" rx="0.8" fill="#8c8c8c"/><path d="M2.5 5 H13.5 V15.5 Q13.5 17 12 17 H4 Q2.5 17 2.5 15.5Z" fill="#8c8c8c"/><rect x="5.5" y="7" width="1.6" height="8" fill="#fff"/><rect x="8.9" y="7" width="1.6" height="8" fill="#fff"/></svg>
<div class="t" style="left:1297px;top:689px;font-size:14px;color:#606266">删除</div>
<div class="a" style="left:335px;top:722px;width:1015px;height:9px;background:#fafafa;border-bottom:1px solid #ebeef5"></div>
<div class="a" style="left:1350px;top:373px;width:3px;height:258px;background:#c1c1c1"></div>
<!-- pagination -->
<div class="t" style="left:631px;top:756px;font-size:13px;color:#606266">共 119 条</div>
<div class="a" style="left:700px;top:749px;width:100px;height:28px;border:1px solid #dcdfe6;border-radius:3px;background:#fff"></div>
<div class="t" style="left:718px;top:756px;font-size:13px;color:#606266">10条/页</div>
<svg class="a" style="left:782px;top:760px" width="10" height="6" viewBox="0 0 10 6"><path d="M1 1 L5 5 L9 1" stroke="#c0c4cc" stroke-width="1" fill="none"/></svg>
<div class="a" style="left:820px;top:749px;width:30px;height:28px;border-radius:2px;background:#f4f4f5"></div>
<svg class="a" style="left:830px;top:758px" width="8" height="10" viewBox="0 0 8 10"><path d="M6 1 L2 5 L6 9" stroke="#c0c4cc" stroke-width="1.4" fill="none"/></svg>
<div class="a" style="left:860px;top:749px;width:30px;height:28px;border-radius:2px;background:#409eff"></div>
<div class="t" style="left:860px;top:755px;width:30px;text-align:center;font-size:14px;font-weight:bold;color:#fff">1</div>
<div class="a" style="left:900px;top:749px;width:30px;height:28px;border-radius:2px;background:#f4f4f5"></div>
<div class="t" style="left:900px;top:755px;width:30px;text-align:center;font-size:14px;font-weight:bold;color:#606266">2</div>
<div class="a" style="left:940px;top:749px;width:30px;height:28px;border-radius:2px;background:#f4f4f5"></div>
<div class="t" style="left:940px;top:755px;width:30px;text-align:center;font-size:14px;font-weight:bold;color:#606266">3</div>
<div class="a" style="left:980px;top:749px;width:30px;height:28px;border-radius:2px;background:#f4f4f5"></div>
<div class="t" style="left:980px;top:755px;width:30px;text-align:center;font-size:14px;font-weight:bold;color:#606266">4</div>
<div class="a" style="left:1020px;top:749px;width:30px;height:28px;border-radius:2px;background:#f4f4f5"></div>
<div class="t" style="left:1020px;top:755px;width:30px;text-align:center;font-size:14px;font-weight:bold;color:#606266">5</div>
<div class="a" style="left:1060px;top:749px;width:30px;height:28px;border-radius:2px;background:#f4f4f5"></div>
<div class="t" style="left:1060px;top:755px;width:30px;text-align:center;font-size:14px;font-weight:bold;color:#606266">6</div>
<div class="a" style="left:1140px;top:749px;width:30px;height:28px;border-radius:2px;background:#f4f4f5"></div>
<div class="t" style="left:1140px;top:755px;width:30px;text-align:center;font-size:14px;font-weight:bold;color:#606266">12</div>
<div class="a" style="left:1100px;top:749px;width:30px;height:28px;border-radius:2px;background:#f4f4f5"></div>
<div class="a" style="left:1109px;top:762px;width:3px;height:3px;border-radius:50%;background:#606266"></div><div class="a" style="left:1114px;top:762px;width:3px;height:3px;border-radius:50%;background:#606266"></div><div class="a" style="left:1119px;top:762px;width:3px;height:3px;border-radius:50%;background:#606266"></div>
<div class="a" style="left:1180px;top:749px;width:30px;height:28px;border-radius:2px;background:#f4f4f5"></div>
<svg class="a" style="left:1191px;top:758px" width="8" height="10" viewBox="0 0 8 10"><path d="M2 1 L6 5 L2 9" stroke="#606266" stroke-width="1.4" fill="none"/></svg>
<div class="t" style="left:1239px;top:757px;font-size:13px;color:#606266">前往</div>
<div class="a" style="left:1269px;top:749px;width:46px;height:28px;border:1px solid #dcdfe6;border-radius:3px;background:#fff"></div>
<div class="t" style="left:1269px;top:755px;width:46px;text-align:center;font-size:14px;color:#606266">1</div>
<div class="t" style="left:1320px;top:757px;font-size:13px;color:#606266">页</div>
</body></html>
